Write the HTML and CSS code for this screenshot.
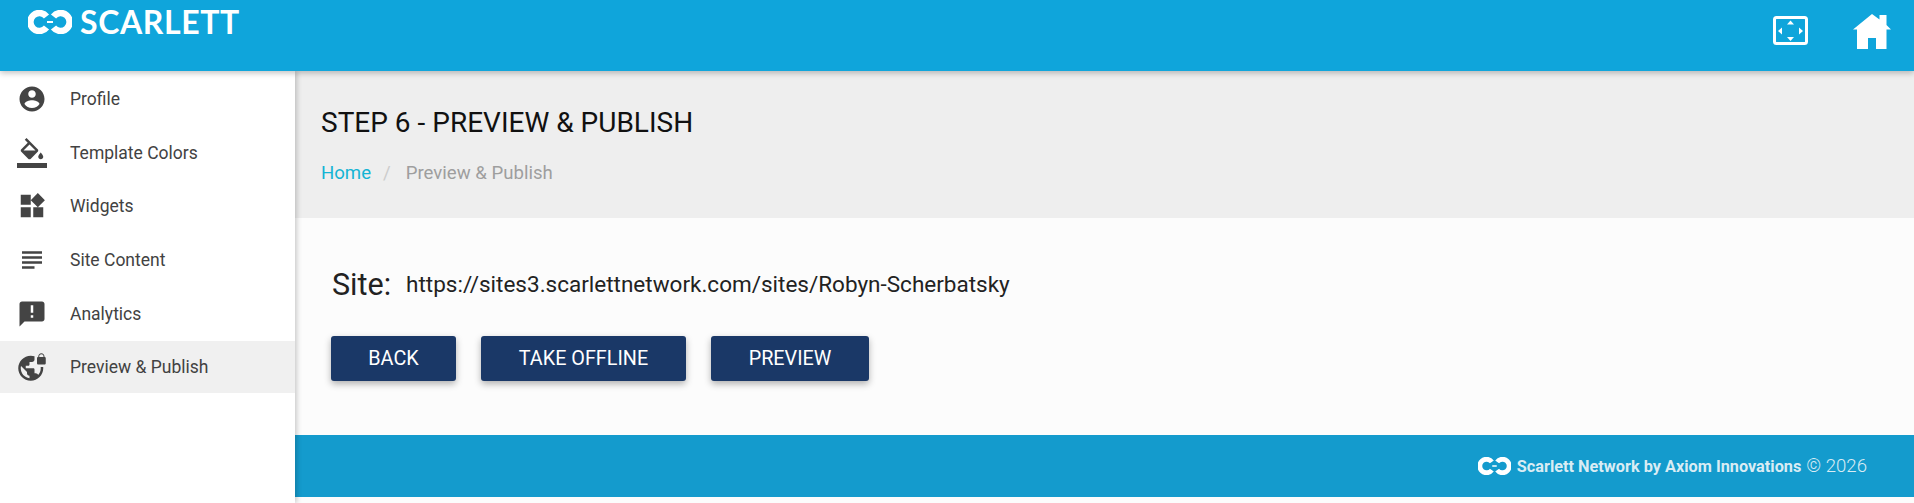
FILE: index.html
```html
<!DOCTYPE html>
<html lang="en">
<head>
<meta charset="utf-8">
<title>Scarlett</title>
<link rel="stylesheet" href="styles.css">
</head>
<body>
<header class="topbar">
  <div class="brand">
    <svg class="logo" viewBox="0 0 44 24"><path class="ring" d="M18.500 6.500A9 9 0 1 0 18.500 17.500M25.500 17.500A9 9 0 1 0 25.500 6.500"/><path class="link" d="M19 12H25"/></svg>
    <span class="brand-name">SCARLETT</span>
  </div>
  <div class="top-icons">
    <svg class="ic-screen" viewBox="0 0 36 30"><rect x="1.500" y="1.500" width="32" height="26" rx="2" fill="none" stroke="#fff" stroke-width="3"/><path fill="#fff" d="M17.500 4.500l3.500 4h-7zM17.500 25l-3.500-4h7zM5 15l4-3.500v7zM30 15l-4 3.500v-7z"/></svg>
    <svg class="ic-home" viewBox="0 0 38 36"><path fill="#fff" d="M0 15.500L19 0l7.500 5.500V1h7v10l4.500 4.500h-4.500V35H23V24h-8v11H4V15.500z"/></svg>
  </div>
</header>
<div class="shell">
  <nav class="sidebar">
    <a class="nav-item"><svg viewBox="0 0 24 24"><path d="M12 2C6.480 2 2 6.480 2 12s4.480 10 10 10 10-4.480 10-10S17.520 2 12 2zm0 3c1.660 0 3 1.340 3 3s-1.340 3-3 3-3-1.340-3-3 1.340-3 3-3zm0 14.200c-2.500 0-4.710-1.280-6-3.220.03-1.990 4-3.080 6-3.080 1.990 0 5.970 1.090 6 3.080-1.290 1.940-3.500 3.220-6 3.220z"/></svg><span>Profile</span></a>
    <a class="nav-item"><svg viewBox="0 0 24 24"><path d="M16.560 8.940L7.620 0 6.210 1.410l2.380 2.380-5.150 5.150c-.59.590-.59 1.540 0 2.120l5.500 5.500c.29.290.68.440 1.060.440s.77-.15 1.060-.44l5.500-5.500c.59-.58.59-1.530 0-2.120zM5.210 10L10 5.210 14.790 10H5.210zM19 11.500s-2 2.170-2 3.500c0 1.100.9 2 2 2s2-.9 2-2c0-1.330-2-3.500-2-3.500z"/><path d="M0 20h24v4H0z"/></svg><span>Template Colors</span></a>
    <a class="nav-item"><svg viewBox="0 0 24 24"><path d="M13 13v8h8v-8h-8zM3 21h8v-8H3v8zM3 3v8h8V3H3zm13.660-1.310L11 7.340 16.660 13l5.660-5.660-5.660-5.650z"/></svg><span>Widgets</span></a>
    <a class="nav-item"><svg viewBox="0 0 24 24"><path d="M14 17H4v2h10v-2zm6-8H4v2h16V9zM4 15h16v-2H4v2zM4 5v2h16V5H4z"/></svg><span>Site Content</span></a>
    <a class="nav-item"><svg viewBox="0 0 24 24"><path d="M20 2H4c-1.100 0-2 .9-2 2v18l4-4h14c1.100 0 2-.9 2-2V4c0-1.100-.9-2-2-2zm-7 9h-2V5h2v6zm0 4h-2v-2h2v2z"/></svg><span>Analytics</span></a>
    <a class="nav-item active"><svg viewBox="0 0 24 24"><path d="M22 4v-.5C22 2.120 20.880 1 19.500 1S17 2.120 17 3.500V4c-.55 0-1 .45-1 1v4c0 .55.45 1 1 1h5c.55 0 1-.45 1-1V5c0-.55-.45-1-1-1zm-.8 0h-3.400v-.5c0-.94.76-1.700 1.700-1.700s1.700.76 1.700 1.700V4zm-2.280 8c.04.33.08.66.08 1 0 2.080-.8 3.970-2.100 5.390-.26-.81-1-1.390-1.900-1.390h-1v-3c0-.55-.45-1-1-1H7v-2h2c.55 0 1-.45 1-1V8h2c1.100 0 2-.9 2-2V3.460c-.95-.3-1.950-.46-3-.46C5.480 3 1 7.480 1 13s4.480 10 10 10 10-4.480 10-10c0-.34-.02-.67-.05-1h-2.030zM10 20.930C6.050 20.440 3 17.080 3 13c0-.62.08-1.210.21-1.790L8 16v1c0 1.100.9 2 2 2v1.930z"/></svg><span>Preview &amp; Publish</span></a>
  </nav>
  <main class="main">
    <section class="page-head">
      <h1 class="page-title">STEP 6 - PREVIEW &amp; PUBLISH</h1>
      <div class="crumbs"><a class="crumb-link">Home</a><span class="crumb-sep">/</span><span class="crumb-current">Preview &amp; Publish</span></div>
    </section>
    <section class="content">
      <div class="site-row"><span class="site-label">Site:</span><span class="site-url">https://sites3.scarlettnetwork.com/sites/Robyn-Scherbatsky</span></div>
      <div class="actions">
        <button class="btn btn-back">BACK</button>
        <button class="btn btn-offline">TAKE OFFLINE</button>
        <button class="btn btn-preview">PREVIEW</button>
      </div>
    </section>
    <footer class="footer">
      <svg class="logo-small" viewBox="0 0 44 24"><path class="ring" d="M18.500 6.500A9 9 0 1 0 18.500 17.500M25.500 17.500A9 9 0 1 0 25.500 6.500"/><path class="link" d="M19 12H25"/></svg>
      <strong class="foot-strong">Scarlett Network by Axiom Innovations</strong><span class="foot-light">© 2026</span>
    </footer>
  </main>
</div>
</body>
</html>
```

FILE: styles.css
```css
* { box-sizing: border-box; }
html, body { margin: 0; height: 100%; overflow: hidden; }
body { font-family: Roboto, "Liberation Sans", sans-serif; background: #fff; color: #212121; }
.topbar { height: 71px; background: #0fa5db; display: flex; justify-content: space-between; box-shadow: 0 2px 6px rgba(0,0,0,.25); position: relative; z-index: 2; }
.brand { display: flex; align-items: center; height: 44px; padding-left: 28px; gap: 8px; }
.logo { width: 44px; height: 24px; flex: none; }
.ring { fill: none; stroke: #fff; stroke-width: 6.500; }
.link { fill: none; stroke: #fff; stroke-width: 2; }
.brand-name { color: #fff; font-family: Lato, sans-serif; font-weight: 700; font-size: 32px; letter-spacing: .6px; line-height: 1; }
.top-icons { display: flex; align-items: flex-start; padding: 14px 23px 0 0; gap: 44px; }
.ic-screen { width: 36px; height: 30px; margin-top: 2px; }
.ic-home { width: 38px; height: 36px; }
.shell { display: flex; height: 432px; }
.sidebar { width: 295px; background: #fff; box-shadow: 2px 0 5px rgba(0,0,0,.2); position: relative; z-index: 1; padding-top: 1px; flex: none; }
.nav-item { display: flex; align-items: center; height: 53.800px; color: #424242; font-size: 17.500px; padding-left: 17px; }
.nav-item svg { width: 30px; height: 30px; fill: #444; flex: none; margin-right: 23px; }
.nav-item.active { background: #f0f0f0; height: 52px; }
.main { flex: 1; display: flex; flex-direction: column; min-width: 0; background: #fcfcfc; }
.page-head { height: 147px; background: #eee; padding: 36px 0 0 26px; flex: none; }
.page-title { margin: 0; font-size: 28px; font-weight: 400; line-height: 32px; color: #111; }
.crumbs { margin-top: 22px; font-size: 18.600px; line-height: 24px; color: #9e9e9e; display: flex; }
.crumb-link { color: #14b4d4; }
.crumb-sep { margin: 0 15px 0 12px; color: #ccc; }
.content { height: 217px; background: #fcfcfc; padding: 46px 0 0 37px; flex: none; }
.site-row { display: flex; align-items: center; height: 40px; }
.site-label { font-size: 30.500px; font-weight: 400; margin-right: 15px; color: #222; }
.site-url { font-size: 22.500px; font-weight: 400; color: #222; }
.actions { display: flex; gap: 25px; margin-top: 32px; margin-left: -1px; }
.btn { height: 45px; border: 0; border-radius: 3px; background: #1a3867; color: #fff; font: 400 19.800px Roboto, sans-serif; box-shadow: 0 3px 7px rgba(0,0,0,.3); padding: 0; }
.btn-back { width: 125px; }
.btn-offline { width: 205px; }
.btn-preview { width: 158px; }
.footer { height: 62px; background: #149bcd; display: flex; justify-content: flex-end; align-items: center; padding-right: 47px; color: #d9ecf4; flex: none; }
.logo-small { width: 33px; height: 18px; margin-right: 6px; }
.foot-strong { font-size: 16.300px; font-weight: 700; margin-right: 5px; }
.foot-light { font-size: 18.600px; font-weight: 300; }
```
